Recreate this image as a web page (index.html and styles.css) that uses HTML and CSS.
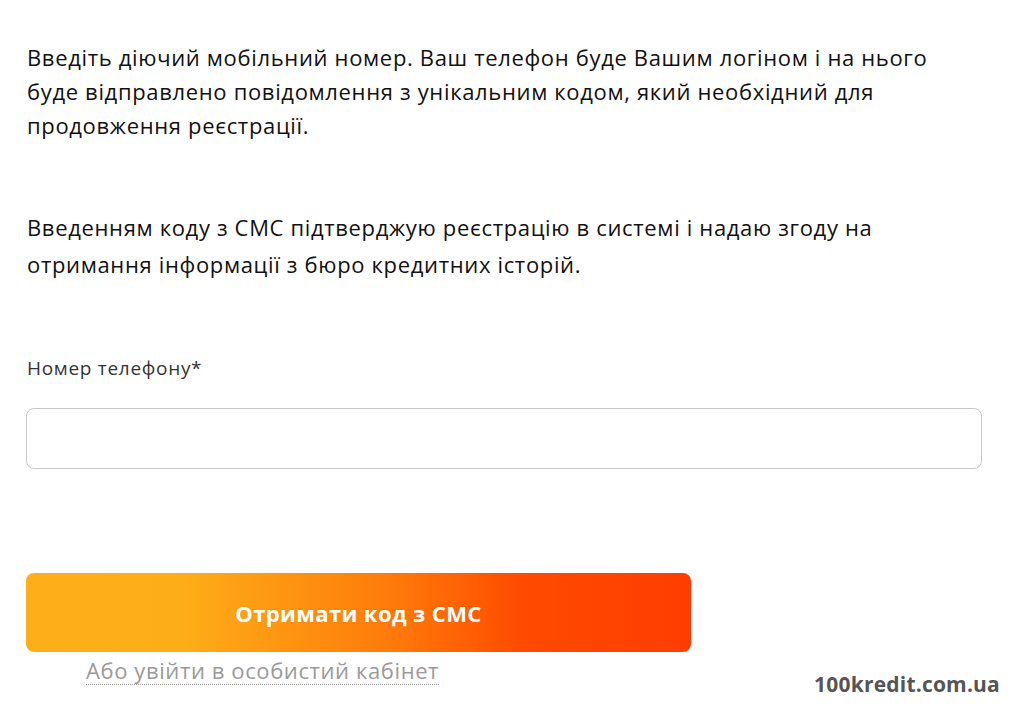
FILE: index.html
```html
<!DOCTYPE html>
<html lang="uk">

<head>
    <meta charset="UTF-8">
    <meta name="viewport" content="width=device-width, initial-scale=1.0">
    <title>Реєстрація</title>
    <link rel="stylesheet" href="styles.css">
</head>

<body>
    <div class="page">
        <!-- опис кроку -->
        <p class="intro">Введіть діючий мобільний номер. Ваш телефон буде Вашим логіном і на нього буде відправлено повідомлення з унікальним кодом, який необхідний для продовження реєстрації.</p>
        <p class="intro agree">Введенням коду з СМС підтверджую реєстрацію в системі і надаю згоду на отримання інформації з бюро кредитних історій.</p>

        <!-- поле телефону -->
        <label class="field-label" for="phone">Номер телефону*</label>
        <input class="field" id="phone" type="tel">

        <div class="actions">
            <button class="btn">Отримати код з СМС</button>
            <a class="login-link" href="javascript:;">Або увійти в особистий кабінет</a>
        </div>

        <div class="mark">100kredit.com.ua</div>
    </div>
</body>

</html>
```

FILE: styles.css
```css
* {
    margin: 0;
    padding: 0;
    box-sizing: border-box;
}

body {
    background-color: #fff;
    font-family: "Open Sans", "Noto Sans", sans-serif;
    color: #111;
}

.page {
    position: relative;
    width: 1024px;
    height: 711px;
    padding: 40px 43px 0 27px;
}

.intro {
    max-width: 940px;
    font-size: 22px;
    line-height: 34px;
    letter-spacing: 0.66px;
}

.agree {
    margin-top: 67px;
    line-height: 37px;
}

.field-label {
    display: block;
    margin-top: 72px;
    font-size: 19px;
    line-height: 26px;
    letter-spacing: 0.7px;
    color: #333;
}

.field {
    display: block;
    width: 956px;
    height: 61px;
    margin: 27px 0 0 -1px;
    border: 1px solid #c8c8c8;
    border-radius: 8px;
    outline: none;
}

.actions {
    margin-top: 104px;
    width: 665px;
    display: flex;
    flex-direction: column;
    align-items: flex-start;
}

.btn {
    width: 665px;
    height: 79px;
    margin-left: -1px;
    border: none;
    border-radius: 8px;
    background: linear-gradient(90deg, #fdae19 0%, #fdad18 24%, #ff7a0a 55%, #ff4a00 75%, #ff3d00 100%);
    color: #fff;
    font-family: "Open Sans", "Noto Sans", sans-serif;
    font-size: 22px;
    font-weight: 700;
    letter-spacing: 0.4px;
}

.login-link {
    margin: 4px 0 0 59px;
    font-size: 22px;
    line-height: 28px;
    letter-spacing: 0.6px;
    color: #9a9a9a;
    text-decoration: none;
    border-bottom: 1px dotted #999;
}

/* водяний знак сайту */
.mark {
    position: absolute;
    right: 24px;
    bottom: 13px;
    font-size: 21px;
    font-weight: 700;
    letter-spacing: 0.2px;
    color: #555;
}
```
